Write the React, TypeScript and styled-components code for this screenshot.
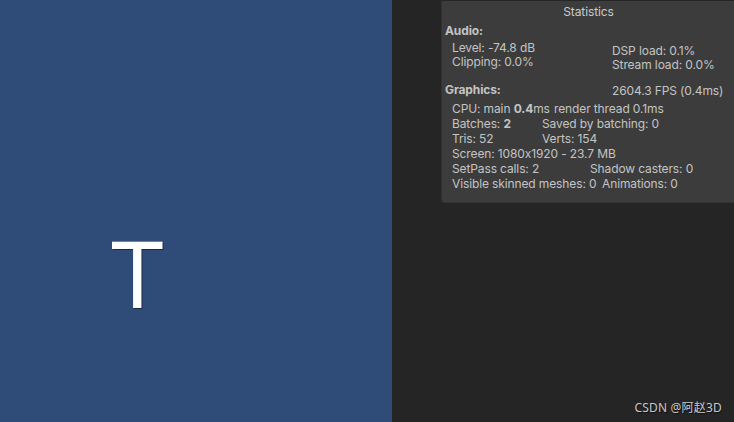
import styled, { createGlobalStyle } from "styled-components"

const Global = createGlobalStyle`
  html, body {
    margin: 0;
    padding: 0;
    background: #252525;
  }
  body {
    font-family: Inter, "Noto Sans", "Noto Sans CJK SC", sans-serif;
    font-feature-settings: "calt" 0;
  }
`

export default function App() {
  return (
    <>
      <Global />
      <Screen>
        <Scene>
          <Letter>T</Letter>
        </Scene>
        <Side>
          <Panel>
            <Title>Statistics</Title>
            <Heading>Audio:</Heading>
            <Columns>
              <Col>
                <Line>Level: -74.8 dB</Line>
                <Line>Clipping: 0.0%</Line>
              </Col>
              <Col $shift={3}>
                <Line>DSP load: 0.1%</Line>
                <Line>Stream load: 0.0%</Line>
              </Col>
            </Columns>
            <GraphicsHead>
              <Heading>Graphics:</Heading>
              <Fps>2604.3 FPS (0.4ms)</Fps>
            </GraphicsHead>
            <Rows>
              <Row $split={102}>
                <span>CPU: main <b>0.4</b>ms</span>
                <span>render thread 0.1ms</span>
              </Row>
              <Row $split={90}>
                <span>Batches: <b>2</b></span>
                <span>Saved by batching: 0</span>
              </Row>
              <Row $split={90}>
                <span>Tris: 52</span>
                <span>Verts: 154</span>
              </Row>
              <Row>
                <span>Screen: 1080x1920 - 23.7 MB</span>
              </Row>
              <Row $split={138}>
                <span>SetPass calls: 2</span>
                <span>Shadow casters: 0</span>
              </Row>
              <Row $split={150}>
                <span>Visible skinned meshes: 0</span>
                <span>Animations: 0</span>
              </Row>
            </Rows>
          </Panel>
          <Mark>CSDN @阿赵3D</Mark>
        </Side>
      </Screen>
    </>
  )
}

const Screen = styled.div`
  width: 734px;
  height: 422px;
  display: flex;
  overflow: hidden;
`

const Scene = styled.div`
  width: 392px;
  flex-shrink: 0;
  background: #2f4b77;
  display: flex;
  align-items: flex-start;
  padding: 227px 0 0 108px;
  box-sizing: border-box;
`

const Letter = styled.div`
  font-family: "Liberation Sans", Arial, sans-serif;
  font-size: 96px;
  line-height: 1;
  color: #ffffff;
  transform: scaleX(0.93);
  text-shadow: 1px 1px 0 rgba(0, 0, 0, 0.45);
`

const Side = styled.div`
  flex: 1;
  display: flex;
  flex-direction: column;
  align-items: flex-end;
  justify-content: space-between;
  padding: 1px 0 6px 0;
`

const Panel = styled.section`
  width: 293px;
  height: 202px;
  box-sizing: border-box;
  background: #3c3c3c;
  border-left: 1px solid #333333;
  border-bottom: 1px solid #333333;
  border-bottom-left-radius: 4px;
  color: #c4c4c4;
  font-size: 12px;
  letter-spacing: -0.12px;
  padding: 0 0 0 3px;
`

const Title = styled.div`
  text-align: center;
  line-height: 22px;
  padding-right: 2px;
  color: #cbcbcb;
`

const Heading = styled.div`
  font-weight: 700;
  line-height: 16px;
`

const Columns = styled.div`
  display: grid;
  grid-template-columns: 160px 1fr;
  padding: 2px 0 0 7px;
`

const Col = styled.div<{ $shift?: number }>`
  padding-top: ${(p) => p.$shift ?? 0}px;
`

const Line = styled.div`
  line-height: 14px;
`

const GraphicsHead = styled.div`
  display: grid;
  grid-template-columns: 167px 1fr;
  align-items: end;
  margin-top: 8px;
  line-height: 16px;
`

const Fps = styled.div`
  padding-top: 4px;
  line-height: 14px;
`

const Rows = styled.div`
  padding: 3px 0 0 7px;
`

const Row = styled.div<{ $split?: number }>`
  display: grid;
  grid-template-columns: ${(p) => (p.$split ? `${p.$split}px 1fr` : "1fr")};
  line-height: 15px;
  white-space: nowrap;

  b {
    font-weight: 700;
  }
`

const Mark = styled.div`
  font-family: "Noto Sans", "Noto Sans CJK SC", sans-serif;
  font-size: 12px;
  color: #c8c8c8;
  padding-right: 12px;
  letter-spacing: 0.2px;
  text-shadow: 1px 1px 1px rgba(0, 0, 0, 0.6);
`
